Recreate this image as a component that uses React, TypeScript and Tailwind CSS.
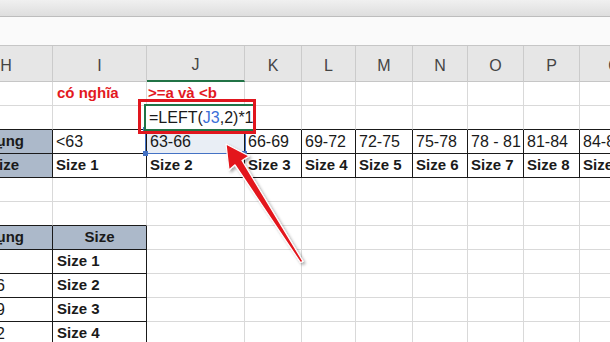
import React from 'react';

const cols = [
    { key: 'H', w: 'w-[93px]' },
    { key: 'I', w: 'w-[94px]' },
    { key: 'J', w: 'w-[98px]' },
    { key: 'K', w: 'w-[57px]' },
    { key: 'L', w: 'w-[54px]' },
    { key: 'M', w: 'w-[57px]' },
    { key: 'N', w: 'w-[55px]' },
    { key: 'O', w: 'w-[56px]' },
    { key: 'P', w: 'w-[56px]' },
    { key: 'Q', w: 'w-[70px]' },
];

const ranges = ['', '<63', '63-66', '66-69', '69-72', '72-75', '75-78', '78 - 81', '81-84', '84-87'];
const sizes = ['Size', 'Size 1', 'Size 2', 'Size 3', 'Size 4', 'Size 5', 'Size 6', 'Size 7', 'Size 8', 'Size 9'];

type CellProps = {
    w: string;
    children?: React.ReactNode;
    className?: string;
};

function Cell({ w, children, className = '' }: CellProps) {
    return (
        <div className={`${w} h-full shrink-0 flex items-center overflow-hidden whitespace-nowrap border-r border-b ${className}`}>
            {children}
        </div>
    );
}

function Row({ children }: { children: React.ReactNode }) {
    return <div className="flex h-[24px]">{children}</div>;
}

export default function App() {
    const grid = 'border-[#d9d9d9]';
    const dark = 'border-[#1a1a1a]';
    const lowerRows = [
        { h: '', i: 'Size 1' },
        { h: '63-66', i: 'Size 2' },
        { h: '66-69', i: 'Size 3' },
        { h: '69-72', i: 'Size 4' },
    ];

    return (
        <div className="w-[610px] h-[342px] overflow-hidden bg-white relative font-['Liberation_Sans',Arial,sans-serif] text-[15px] text-[#1a1a1a]">
            {/* ribbon edge + formula bar */}
            <div className="h-[17px] bg-gradient-to-b from-[#f0f0f0] to-[#dedede] border-b border-[#bdbdbd]" />
            <div className="h-[29px] bg-[#fafafa] border-b border-[#c6c6c6]" />

            <div className="ml-[-40px]">
                {/* column headers */}
                <div className="flex h-[36px] bg-[#e6e6e6]">
                    {cols.map((c) => (
                        <div
                            key={c.key}
                            className={`${c.w} h-full shrink-0 flex items-center justify-center pt-[4px] border-r border-[#cbcbcb] text-[16px] text-[#444] ${c.key === 'J' ? 'border-b-2 border-b-[#217346]' : 'border-b border-b-[#c6c6c6]'}`}
                        >
                            {c.key}
                        </div>
                    ))}
                </div>

                {/* row 1 */}
                <Row>
                    {cols.map((c) => (
                        <Cell key={c.key} w={c.w} className={grid}>
                            {c.key === 'I' && <span className="pl-[4px] font-bold text-[#e3191f]">có nghĩa</span>}
                            {c.key === 'J' && <span className="pl-[1px] font-bold text-[#e3191f]">&gt;=a và &lt;b</span>}
                        </Cell>
                    ))}
                </Row>

                {/* row 2 */}
                <Row>
                    {cols.map((c) => (
                        <Cell key={c.key} w={c.w} className={`${grid} border-b-[#1a1a1a]`} />
                    ))}
                </Row>

                {/* row 3 */}
                <Row>
                    {cols.map((c, idx) =>
                        c.key === 'H' ? (
                            <Cell key={c.key} w={c.w} className={`${dark} bg-[#acb9ca] justify-end pr-[28px] font-bold`}>
                                Vòng bụng
                            </Cell>
                        ) : (
                            <Cell key={c.key} w={c.w} className={`${dark} text-[16px] ${c.key === 'J' ? 'bg-[#e9eef5]' : ''}`}>
                                <span className="pl-[3px]">{ranges[idx]}</span>
                            </Cell>
                        ),
                    )}
                </Row>

                {/* row 4 */}
                <Row>
                    {cols.map((c, idx) =>
                        c.key === 'H' ? (
                            <Cell key={c.key} w={c.w} className={`${dark} bg-[#acb9ca] justify-end pr-[33px] font-bold`}>
                                Size
                            </Cell>
                        ) : (
                            <Cell key={c.key} w={c.w} className={`${dark} font-bold`}>
                                <span className="pl-[3px]">{sizes[idx]}</span>
                            </Cell>
                        ),
                    )}
                </Row>

                {/* rows 5-6 */}
                {[5, 6].map((r) => (
                    <Row key={r}>
                        {cols.map((c) => (
                            <Cell
                                key={c.key}
                                w={c.w}
                                className={`${grid} ${r === 6 && (c.key === 'H' || c.key === 'I') ? 'border-b-[#1a1a1a]' : ''}`}
                            />
                        ))}
                    </Row>
                ))}

                {/* lower table header */}
                <Row>
                    {cols.map((c) =>
                        c.key === 'H' ? (
                            <Cell key={c.key} w={c.w} className={`${dark} bg-[#acb9ca] justify-end pr-[28px] font-bold`}>
                                Vòng bụng
                            </Cell>
                        ) : c.key === 'I' ? (
                            <Cell key={c.key} w={c.w} className={`${dark} bg-[#acb9ca] justify-center font-bold`}>
                                Size
                            </Cell>
                        ) : (
                            <Cell key={c.key} w={c.w} className={grid} />
                        ),
                    )}
                </Row>

                {lowerRows.map((lr, n) => (
                    <Row key={n}>
                        {cols.map((c) =>
                            c.key === 'H' ? (
                                <Cell key={c.key} w={c.w} className={`${dark} text-[16px]`}>
                                    <span className="pl-[4px]">{lr.h}</span>
                                </Cell>
                            ) : c.key === 'I' ? (
                                <Cell key={c.key} w={c.w} className={`${dark} font-bold`}>
                                    <span className="pl-[4px]">{lr.i}</span>
                                </Cell>
                            ) : (
                                <Cell key={c.key} w={c.w} className={grid} />
                            ),
                        )}
                    </Row>
                ))}
            </div>

            {/* J3 reference highlight */}
            <div className="absolute left-[145px] top-[129px] w-[101px] h-[25px] border border-[#4472c4]" />
            {[
                'left-[143px] top-[127px]',
                'left-[242px] top-[127px]',
                'left-[143px] top-[151px]',
                'left-[242px] top-[151px]',
            ].map((p) => (
                <div key={p} className={`absolute ${p} w-[5px] h-[5px] bg-[#4472c4]`} />
            ))}

            {/* J2 being edited: text runs past the cell edge */}
            <div className="absolute left-[144px] top-[104px] w-[109px] h-[27px] bg-white border-2 border-r-0 border-[#217346] flex items-center pl-[3px] whitespace-nowrap text-[16px]">
                <span>
                    =LEFT(<span className="text-[#3a6fd8]">J3</span>,2)*1
                </span>
            </div>

            {/* red callout box */}
            <div className="absolute left-[138px] top-[99px] w-[118px] h-[35px] border-[3px] border-[#e0161e]" />

            {/* arrow */}
            <svg className="absolute left-0 top-0 w-[610px] h-[342px] pointer-events-none" viewBox="0 0 610 342">
                <defs>
                    <filter id="sh" x="-20%" y="-20%" width="140%" height="140%">
                        <feDropShadow dx="2" dy="2" stdDeviation="1.5" floodColor="#000" floodOpacity="0.35" />
                    </filter>
                </defs>
                <polygon
                    points="226,144 249,156 242,160.5 303,261.5 300.5,262.5 235,164.8 229,170"
                    fill="#e3161d"
                    stroke="#fff"
                    strokeWidth="1.2"
                    strokeLinejoin="round"
                    filter="url(#sh)"
                />
            </svg>
        </div>
    );
}
